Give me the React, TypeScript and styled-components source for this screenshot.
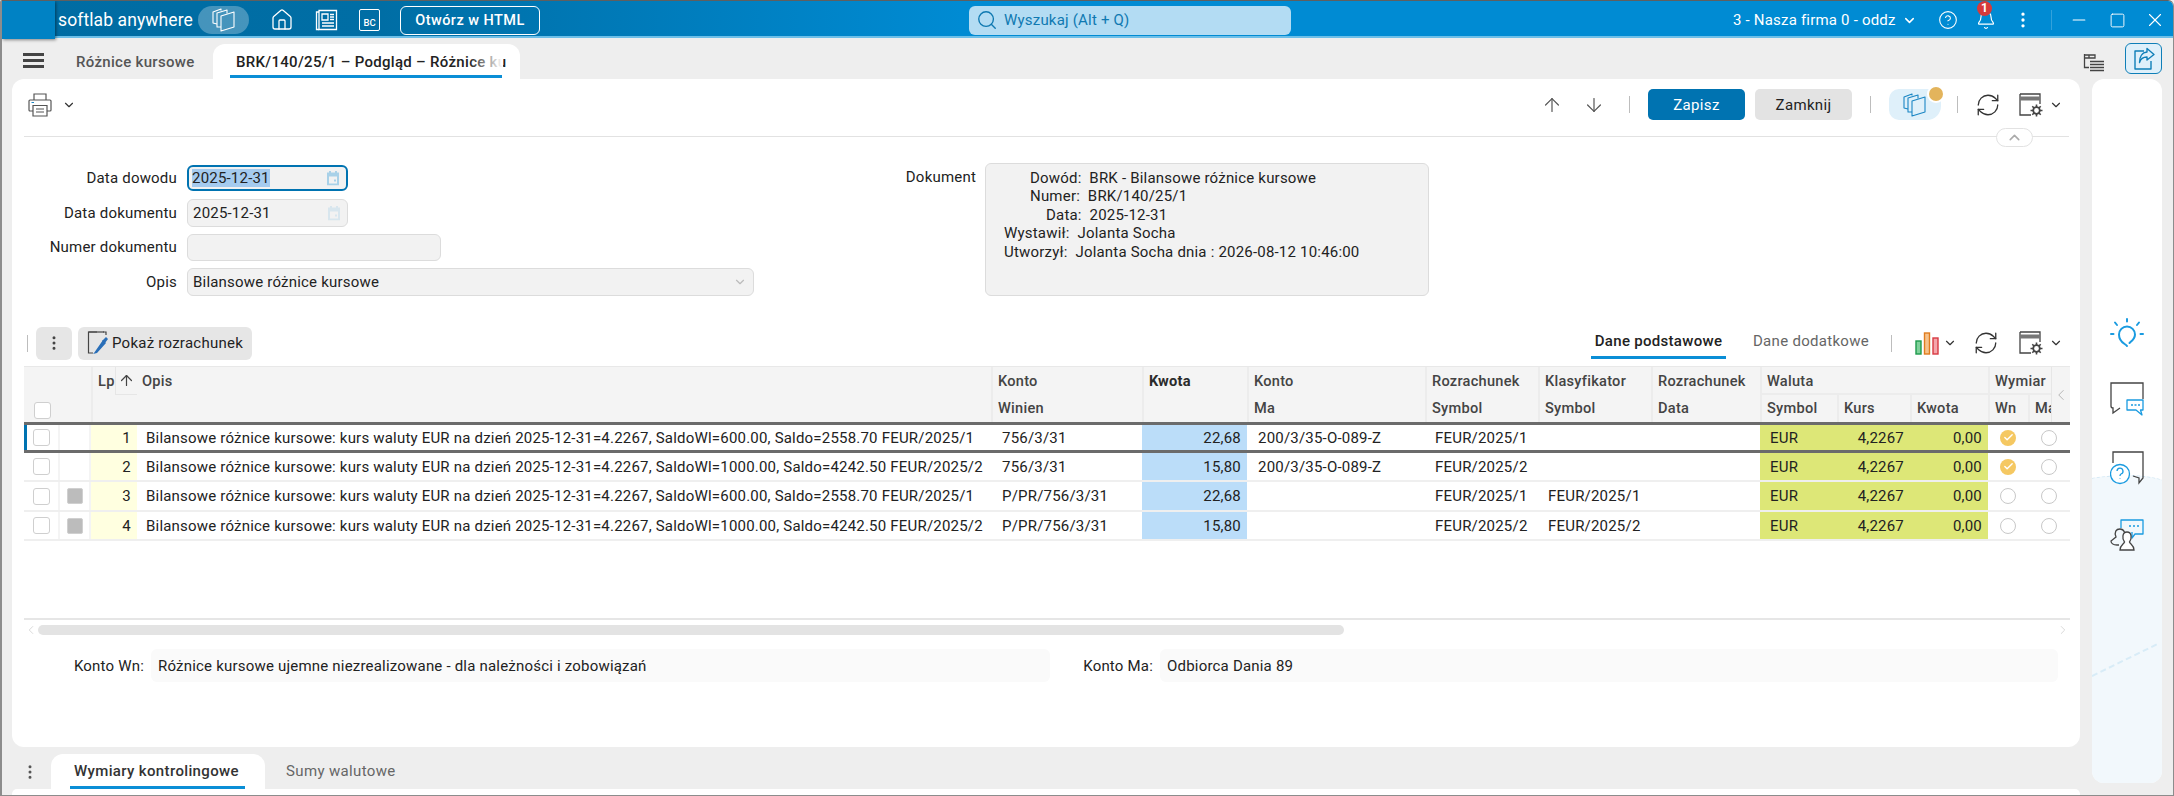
import React from "react";
import styled, { createGlobalStyle } from "styled-components";
import {
  ArrowDown,
  ArrowUp,
  Bell,
  Check,
  ChevronDown,
  ChevronLeft,
  ChevronRight,
  ChevronUp,
  CircleHelp,
  EllipsisVertical,
  Home,
  Minus,
  RefreshCw,
  Search,
  Square,
  X,
} from "lucide-react";

const GlobalStyle = createGlobalStyle`
  html, body {
    margin: 0;
    padding: 0;
    background: #eee;
    overflow: hidden;
  }
  * {
    box-sizing: border-box;
  }
`;

const COLUMNS = "36px 31px 46px 854px 151px 105px 178px 113px 113px 109px 77px 73px 78px 40px 42px";

const Frame = styled.div`
  width: 2174px;
  height: 796px;
  display: flex;
  flex-direction: column;
  background: #eee;
  border: 1px solid #8c8c8c;
  border-top-color: #5f5f5f;
  border-left-width: 2px;
  border-top-left-radius: 2px;
  border-top-right-radius: 6px;
  overflow: hidden;
  font-family: Roboto, "Liberation Sans", sans-serif;
  font-size: 15px;
  letter-spacing: 0.2px;
  color: #222;
`;

/* top bar */
const TopBar = styled.header`
  flex: none;
  height: 37px;
  display: grid;
  grid-template-columns: 967px 322px 1fr;
  align-items: center;
  color: #fff;
  background: linear-gradient(90deg, #006ca3 0, #006ea5 380px, #008bd3 960px);
  border-bottom: 2px solid #6dbfe8;
`;

const TopLeft = styled.div`
  display: flex;
  align-items: center;
  height: 100%;
`;

const LogoBlock = styled.div`
  width: 53px;
  height: 38px;
  background: #0082c4;
  box-shadow: 1px 1px 3px rgba(0, 0, 0, 0.45);
  flex: none;
`;

const Brand = styled.span`
  margin-left: 3px;
  width: 140px;
  font-size: 17.5px;
  letter-spacing: 0.1px;
  white-space: nowrap;
`;

const BrandPill = styled.div`
  width: 51px;
  height: 28px;
  border-radius: 14px;
  background: rgba(255, 255, 255, 0.27);
  display: flex;
  align-items: center;
  justify-content: center;
`;

const BarIcons = styled.div`
  display: flex;
  align-items: center;
  gap: 21px;
  margin-left: 21px;
`;

const BcBadge = styled.div`
  width: 21px;
  height: 22px;
  border: 1.5px solid #fff;
  border-radius: 2px;
  font-size: 9.5px;
  font-weight: 500;
  letter-spacing: 0;
  display: flex;
  align-items: flex-end;
  justify-content: center;
  padding-bottom: 2px;
`;

const HtmlButton = styled.button`
  margin-left: 20px;
  width: 140px;
  height: 29px;
  border: 1.5px solid #fff;
  border-radius: 6px;
  background: transparent;
  color: #fff;
  font: 500 14.5px Roboto, sans-serif;
  letter-spacing: 0.45px;
`;

const SearchBox = styled.div`
  height: 29px;
  border-radius: 6px;
  background: #b3dcf3;
  color: #0f79b1;
  display: flex;
  align-items: center;
  gap: 6px;
  padding-left: 7px;
`;

const TopRight = styled.div`
  display: flex;
  align-items: center;
  height: 100%;
  padding-left: 442px;
`;

const Company = styled.span`
  width: 158px;
  white-space: nowrap;
`;

const BarButton = styled.span<{ $width: number }>`
  position: relative;
  width: ${(p) => p.$width}px;
  height: 100%;
  display: flex;
  align-items: center;
  justify-content: center;
  flex: none;
`;

const Badge = styled.span`
  position: absolute;
  top: 0;
  left: 9px;
  width: 15px;
  height: 15px;
  border-radius: 50%;
  background: #d63a3a;
  color: #fff;
  font-size: 12px;
  font-weight: 700;
  line-height: 15px;
  text-align: center;
`;

const BarDivider = styled.span`
  width: 1px;
  height: 20px;
  background: rgba(255, 255, 255, 0.2);
  margin: 0 8px 0 9px;
  flex: none;
`;

/* work area */
const TabStrip = styled.nav`
  flex: none;
  height: 41px;
  display: flex;
  align-items: flex-end;
`;

const MenuButton = styled.div`
  width: 21px;
  height: 15px;
  margin: 0 32px 11px 21px;
  border-top: 3px solid #444;
  border-bottom: 3px solid #444;
  position: relative;
  flex: none;
  &::after {
    content: "";
    position: absolute;
    left: 0;
    right: 0;
    top: 3px;
    height: 3px;
    background: #444;
  }
`;

const TopTab = styled.div<{ $active?: boolean; $width: number }>`
  position: relative;
  width: ${(p) => p.$width}px;
  height: 35px;
  flex: none;
  padding: 9px 0 0 ${(p) => (p.$active ? 23 : 0)}px;
  background: ${(p) => (p.$active ? "#fff" : "transparent")};
  border-radius: 12px 12px 0 0;
  color: ${(p) => (p.$active ? "#222" : "#555")};
  font-weight: 500;
  letter-spacing: 0.3px;
  white-space: nowrap;
`;

const TabFade = styled.span`
  position: absolute;
  top: 4px;
  right: 17px;
  width: 34px;
  height: 24px;
  background: linear-gradient(90deg, rgba(255, 255, 255, 0), #fff);
`;

const TabLine = styled.span`
  position: absolute;
  left: 17px;
  right: 18px;
  bottom: 1px;
  height: 3px;
  background: #0a8ed6;
`;

const StripTools = styled.div`
  margin-left: auto;
  display: flex;
  align-items: flex-start;
  height: 36px;
  padding-right: 11px;
`;

const TreeSlot = styled.span`
  display: flex;
  margin-top: 10px;
`;

const ShareButton = styled.div`
  width: 37px;
  height: 31px;
  margin-left: 20px;
  border: 1px solid #0f7fb8;
  border-radius: 6px;
  background: #dff0fa;
  display: flex;
  align-items: center;
  justify-content: center;
`;

const Layout = styled.div`
  flex: 1;
  min-height: 0;
  display: grid;
  grid-template-columns: 2068px 70px;
  column-gap: 12px;
  padding-left: 10px;
`;

const LeftColumn = styled.div`
  display: flex;
  flex-direction: column;
`;

const MainPanel = styled.main`
  position: relative;
  height: 668px;
  flex: none;
  background: #fff;
  border-radius: 12px;
  padding: 0 11px 0 12px;
`;

const DocToolbar = styled.div`
  height: 58px;
  display: flex;
  align-items: center;
  border-bottom: 1px solid #e2e2e2;
  padding: 0 0 6px 4px;
`;

const IconSlot = styled.span<{ $width: number }>`
  width: ${(p) => p.$width}px;
  display: inline-flex;
  align-items: center;
  justify-content: center;
  flex: none;
  color: #555;
`;

const Spacer = styled.div`
  flex: 1;
`;

const Divider = styled.span<{ $left?: number; $right?: number }>`
  width: 1px;
  height: 17px;
  background: #bdbdbd;
  flex: none;
  margin: 0 ${(p) => p.$right ?? 0}px 0 ${(p) => p.$left ?? 0}px;
`;

const ActionButton = styled.button<{ $primary?: boolean }>`
  width: 97px;
  height: 31px;
  border: 0;
  border-radius: 5px;
  background: ${(p) => (p.$primary ? "#0073b1" : "#e3e3e3")};
  color: ${(p) => (p.$primary ? "#fff" : "#222")};
  font: 400 15px Roboto, sans-serif;
  letter-spacing: 0.35px;
  flex: none;
`;

const ModuleButton = styled.div`
  position: relative;
  width: 52px;
  height: 31px;
  border-radius: 10px 14px 14px 10px;
  background: #dff0fa;
  display: flex;
  align-items: center;
  justify-content: center;
  flex: none;
`;

const ModuleDot = styled.span`
  position: absolute;
  top: -2px;
  right: -2px;
  width: 14px;
  height: 14px;
  border-radius: 50%;
  background: #e3b45c;
  box-shadow: 0 0 0 2px #fff;
`;

const CollapsePill = styled.div`
  position: absolute;
  top: 49px;
  left: 1984px;
  width: 37px;
  height: 19px;
  border: 1px solid #e2e2e2;
  border-radius: 10px;
  background: #fff;
  display: flex;
  align-items: center;
  justify-content: center;
  color: #aaa;
`;

/* form */
const FormArea = styled.section`
  height: 189px;
  display: flex;
  padding-top: 28px;
`;

const FormColumn = styled.div`
  width: 880px;
  display: flex;
  flex-direction: column;
  gap: 7px;
`;

const FieldRow = styled.div<{ $short?: boolean }>`
  display: flex;
  align-items: center;
  height: ${(p) => (p.$short ? 26 : 27.5)}px;
  margin-bottom: ${(p) => (p.$short ? 1 : 0)}px;
`;

const FieldLabel = styled.label`
  width: 153px;
  flex: none;
  text-align: right;
`;

const Field = styled.div<{ $width: number; $focused?: boolean }>`
  position: relative;
  width: ${(p) => p.$width}px;
  height: ${(p) => (p.$focused ? 26 : 27.5)}px;
  margin-left: 10px;
  display: flex;
  align-items: center;
  padding-left: ${(p) => (p.$focused ? 3 : 5)}px;
  border: ${(p) => (p.$focused ? "2px solid #0073b1" : "1px solid #dcdcdc")};
  border-radius: 6px;
  background: #f2f2f2;
`;

const Selected = styled.span`
  background: #a5cbef;
`;

const FieldIcon = styled.span<{ $dim?: boolean }>`
  position: absolute;
  right: 6px;
  top: 50%;
  transform: translateY(-50%);
  display: flex;
  opacity: ${(p) => (p.$dim ? 0.35 : 1)};
`;

const DocColumn = styled.div`
  display: flex;
  align-items: flex-start;
  margin-top: -2px;
`;

const DocLabel = styled.label`
  width: 72px;
  flex: none;
  text-align: right;
  white-space: nowrap;
  line-height: 28px;
`;

const DocBox = styled.div`
  width: 444px;
  height: 133px;
  margin-left: 9px;
  padding-top: 5px;
  border: 1px solid #dcdcdc;
  border-radius: 6px;
  background: #f2f2f2;
  line-height: 18.4px;
`;

const DocLine = styled.div<{ $indent: number }>`
  margin-left: ${(p) => p.$indent}px;
  white-space: pre;
`;

/* grid toolbar */
const GridToolbar = styled.div`
  height: 40px;
  display: flex;
  align-items: flex-start;
  padding-left: 3px;
`;

const ToolBlock = styled.div`
  display: flex;
  align-items: center;
  height: 34px;
`;

const SoftButton = styled.button<{ $width: number; $gap?: number }>`
  width: ${(p) => p.$width}px;
  height: 33px;
  border: 0;
  border-radius: 6px;
  background: #e6e6e6;
  color: #222;
  font: 400 15px Roboto, sans-serif;
  letter-spacing: 0.25px;
  display: flex;
  align-items: center;
  justify-content: center;
  gap: 3px;
  padding: 0;
  margin-left: ${(p) => p.$gap ?? 6}px;
  flex: none;
`;

const ViewTab = styled.div<{ $active?: boolean; $width: number }>`
  width: ${(p) => p.$width}px;
  height: 31px;
  text-align: center;
  line-height: 27px;
  font-weight: ${(p) => (p.$active ? 500 : 400)};
  letter-spacing: 0.3px;
  color: ${(p) => (p.$active ? "#222" : "#666")};
  border-bottom: 3px solid ${(p) => (p.$active ? "#0a8ed6" : "transparent")};
  flex: none;
`;

/* table */
const Table = styled.div`
  width: 2046px;
  border-top: 1px solid #e8e8e8;
`;

const HeadGrid = styled.div`
  position: relative;
  display: grid;
  grid-template-columns: ${COLUMNS};
  grid-template-rows: 28px 27px;
  background: #f4f4f4;
  overflow: hidden;
`;

const HeadCell = styled.div<{
  $col: number;
  $row?: number;
  $colSpan?: number;
  $rowSpan?: number;
  $strong?: boolean;
  $under?: boolean;
  $noRule?: boolean;
}>`
  position: relative;
  grid-column: ${(p) => p.$col} / span ${(p) => p.$colSpan ?? 1};
  grid-row: ${(p) => p.$row ?? 1} / span ${(p) => p.$rowSpan ?? 1};
  padding: ${(p) => ((p.$row ?? 1) === 2 ? 4 : 5)}px 0 0 5px;
  font-weight: ${(p) => (p.$strong ? 700 : 500)};
  font-size: 14.6px;
  letter-spacing: 0.25px;
  color: ${(p) => (p.$strong ? "#2b2b2b" : "#444")};
  white-space: nowrap;
  overflow: hidden;
  border-left: ${(p) => (p.$noRule ? "0" : "2px solid #ececec")};
  border-bottom: ${(p) => (p.$under ? "2px solid #ececec" : "0")};
`;

const PlainHead = styled.div`
  grid-column: 1 / span 2;
  grid-row: 1 / span 2;
  display: flex;
  align-items: flex-end;
  padding: 0 0 3px 10px;
`;

const SortMark = styled.span`
  position: absolute;
  top: 0;
  right: 0;
  width: 22px;
  height: 28px;
  border-left: 1px solid #e6e6e6;
  border-bottom: 1px solid #e6e6e6;
  display: flex;
  align-items: center;
  justify-content: center;
  color: #444;
`;

const ScrollLeft = styled.div`
  position: absolute;
  top: 0;
  right: 0;
  width: 19px;
  height: 55px;
  background: #f4f4f4;
  border-left: 1px solid #e6e6e6;
  display: flex;
  align-items: center;
  justify-content: center;
  color: #b5b5b5;
`;

const Row = styled.div<{ $selected?: boolean; $height: number }>`
  position: relative;
  display: grid;
  grid-template-columns: ${COLUMNS};
  height: ${(p) => p.$height}px;
  border-top: ${(p) => (p.$selected ? "3px solid #6b6b6b" : "0")};
  border-bottom: ${(p) => (p.$selected ? "3px solid #6b6b6b" : "2px solid #efefef")};
  align-items: stretch;
  &::before {
    content: "";
    display: ${(p) => (p.$selected ? "block" : "none")};
    position: absolute;
    left: 0;
    top: 0;
    bottom: 0;
    width: 3px;
    background: #0073b1;
  }
`;

const Cell = styled.div<{ $tint?: string; $right?: boolean; $pad?: number }>`
  display: flex;
  align-items: center;
  justify-content: ${(p) => (p.$right ? "flex-end" : "flex-start")};
  padding: 0 ${(p) => (p.$right ? 6 : 0)}px 0 ${(p) => p.$pad ?? 0}px;
  background: ${(p) => p.$tint ?? "transparent"};
  white-space: nowrap;
  overflow: hidden;
  color: #222;
`;

const CenterCell = styled.div<{ $noRule?: boolean }>`
  display: flex;
  align-items: center;
  justify-content: center;
  border-right: ${(p) => (p.$noRule ? "0" : "2px solid #f4f4f4")};
`;

const Tick = styled.span`
  width: 17px;
  height: 17px;
  border: 1.5px solid #cfcfcf;
  border-radius: 3px;
  background: #fff;
  flex: none;
`;

const GrayMark = styled.span`
  width: 16px;
  height: 16px;
  border-radius: 2px;
  background: #bcbcbc;
  border: 1px solid #d0d0d0;
`;

const Radio = styled.span<{ $on?: boolean }>`
  width: 16px;
  height: 16px;
  border-radius: 50%;
  border: ${(p) => (p.$on ? "0" : "1px solid #c8c8c8")};
  background: ${(p) => (p.$on ? "#f5c862" : "#fff")};
  color: #fff;
  display: flex;
  align-items: center;
  justify-content: center;
`;

const TableGap = styled.div`
  height: 79px;
  border-bottom: 2px solid #e6e6e6;
`;

const ScrollRow = styled.div`
  height: 16px;
  width: 2046px;
  display: flex;
  align-items: center;
  padding-top: 3px;
  color: #d4d4d4;
`;

const ScrollTrack = styled.div`
  flex: 1;
  height: 10px;
  display: flex;
`;

const ScrollThumb = styled.div`
  width: 1306px;
  height: 10px;
  border-radius: 5px;
  background: #e3e3e3;
`;

const AccountRow = styled.div`
  display: flex;
  align-items: center;
  height: 33px;
  margin-top: 13px;
`;

const AccountLabel = styled.span<{ $width: number }>`
  width: ${(p) => p.$width}px;
  text-align: right;
  flex: none;
  padding-right: 7px;
`;

const AccountValue = styled.div<{ $width: number }>`
  width: ${(p) => p.$width}px;
  height: 33px;
  flex: none;
  border-radius: 6px;
  background: #fafafa;
  display: flex;
  align-items: center;
  padding-left: 7px;
`;

/* bottom tabs */
const BottomTabs = styled.div`
  height: 42px;
  flex: none;
  display: flex;
  align-items: flex-end;
  color: #555;
`;

const BottomMenu = styled.span`
  width: 39px;
  height: 35px;
  display: flex;
  align-items: center;
  justify-content: flex-start;
  padding-left: 9px;
`;

const BottomTab = styled.div<{ $active?: boolean; $width: number }>`
  position: relative;
  width: ${(p) => p.$width}px;
  height: 35px;
  flex: none;
  border-radius: 12px 12px 0 0;
  background: ${(p) => (p.$active ? "#fff" : "transparent")};
  color: ${(p) => (p.$active ? "#333" : "#666")};
  padding: 8px 0 0 ${(p) => (p.$active ? 23 : 21)}px;
  font-weight: ${(p) => (p.$active ? 500 : 400)};
  letter-spacing: 0.35px;
  white-space: nowrap;
`;

const BottomLine = styled.span`
  position: absolute;
  left: 19px;
  right: 20px;
  bottom: 0;
  height: 3px;
  background: #0a8ed6;
`;

const BottomEdge = styled.div`
  height: 6px;
  background: #fff;
  border-radius: 5px 5px 0 0;
`;

/* side panel */
const SidePanel = styled.aside`
  position: relative;
  height: 704px;
  background: #fff;
  border-radius: 12px;
  overflow: hidden;
  display: flex;
  flex-direction: column;
  align-items: center;
  padding-top: 239px;
  gap: 34px;
  &::before {
    content: "";
    position: absolute;
    left: -40px;
    right: -10px;
    top: 396px;
    height: 340px;
    border-top: 1px dashed #cfe6f4;
    border-radius: 100% 60% 0 0 / 12% 6% 0 0;
    background: #f2f8fc;
  }
  &::after {
    content: "";
    position: absolute;
    left: 0;
    top: 596px;
    width: 72px;
    border-top: 2px dashed #d8ecf7;
    transform-origin: left center;
    transform: rotate(-26deg);
  }
`;

const SideIcon = styled.span`
  position: relative;
  display: flex;
`;

const PagesIcon = ({ color, size = 26 }: { color: string; size?: number }) => (
  <svg width={size} height={size} viewBox="0 0 26 26" fill="none" stroke={color} strokeWidth="1.1" strokeLinejoin="round">
    <path d="M10 9 L23 5 V20 L10 24 Z" />
    <path d="M10 20 L6 20 V6 L16 3 V6.5" />
    <path d="M6 17 L2 16 V5 L10 2 V3.5" />
  </svg>
);

const NewsIcon = () => (
  <svg width="23" height="22" viewBox="0 0 23 22" fill="none" stroke="#fff" strokeWidth="1.3">
    <path d="M4 1.5 H21.5 V20.5 H4 Z" />
    <path d="M4 3 H1.5 V20.5 H4" />
    <path d="M7 5 H13 V11 H7 Z" />
    <path d="M15 5.5 H19 M15 8 H19 M15 10.5 H19 M7 14 H19 M7 17 H19" />
  </svg>
);

const PrinterIcon = () => (
  <svg width="24" height="24" viewBox="0 0 24 24" fill="none" stroke="#555" strokeWidth="1.2">
    <path d="M6 7 V1 H18 V7" />
    <path d="M5 18 H2 A1 1 0 0 1 1 17 V8 A1 1 0 0 1 2 7 H22 A1 1 0 0 1 23 8 V17 A1 1 0 0 1 22 18 H19" />
    <path d="M5 12.5 H19 V23 H5 Z" fill="#fff" />
    <path d="M8 16 H16 M8 19 H16" />
    <path d="M3.5 9.5 H6" stroke="#1a86c4" />
  </svg>
);

const WindowGearIcon = () => (
  <svg width="24" height="24" viewBox="0 0 24 24" fill="none" stroke="#444" strokeWidth="1.3">
    <path d="M1 1 H21 V11 M12 22 H1 V1" />
    <path d="M1 5.5 H21" strokeWidth="4" stroke="#777" />
    <circle cx="17.5" cy="17.5" r="3.3" strokeWidth="1.8" />
    <path d="M17.5 11.5 V14 M17.5 21 V23.5 M11.5 17.5 H14 M21 17.5 H23.5 M13.3 13.3 L15 15 M20 20 L21.7 21.7 M21.7 13.3 L20 15 M15 20 L13.3 21.7" strokeWidth="1.6" />
  </svg>
);

const CalendarIcon = () => (
  <svg width="14" height="15" viewBox="0 0 14 15" fill="#a9d1e8">
    <path d="M1 2 H3 V0.5 H5 V2 H9 V0.5 H11 V2 H13 V15 H1 Z M3 6 V13 H11 V6 Z" />
    <path d="M8 9 H10 V11 H8 Z" />
  </svg>
);

const TreeListIcon = () => (
  <svg width="22" height="20" viewBox="0 0 22 20" fill="none" stroke="#444" strokeWidth="1.3">
    <path d="M1.5 1 V7 M1.5 2 H6 V5 H1.5 M6 2 H12 V5 H6" />
    <path d="M7 8.5 H21 M7 11.5 H21 M7 14.5 H21 M7 17.5 H21 M1.5 7 V14.5 H6" />
  </svg>
);

const ShareIcon = () => (
  <svg width="24" height="24" viewBox="0 0 24 24" fill="none" stroke="#0f7fb8" strokeWidth="1.4" strokeLinejoin="round">
    <path d="M12 4 H3 V22 H19 V14" />
    <path d="M15 1.5 L22 7.5 L15 13 V10 C11 10 8.5 12 7.5 15.5 C7.5 10 10 5.5 15 5 Z" />
  </svg>
);

const NoteIcon = () => (
  <svg width="22" height="24" viewBox="0 0 22 24" fill="none">
    <path d="M10 1 H1.5 V22 H6 M16 1 H19 V4" stroke="#444" strokeWidth="1.2" />
    <path d="M1.5 1 H17" stroke="#444" strokeWidth="1.2" />
    <path d="M7 22 L16 9 L19 12 L10 22 L6 23 Z" fill="#2a6fb8" />
    <path d="M15 10 L19 6 L21 8 L18 12" fill="#2a6fb8" />
  </svg>
);

const ChartIcon = () => (
  <svg width="24" height="23" viewBox="0 0 24 23" fill="none" strokeWidth="1.4">
    <rect x="1" y="9" width="5" height="13" fill="#7fd19a" stroke="#1d9b4c" />
    <rect x="9.5" y="1" width="5" height="21" fill="#f6c28b" stroke="#e07c1e" />
    <rect x="18" y="6" width="5" height="16" fill="#f4a6ab" stroke="#d83a42" />
  </svg>
);

const BulbIcon = () => (
  <svg width="34" height="30" viewBox="0 0 34 30" fill="none" stroke="#1a9be0" strokeWidth="2" strokeLinecap="round">
    <path d="M17 28 C15.5 25.5 9 25 9 16.5 A8 8 0 1 1 25 16.5 C25 21 21.5 23 19.5 25" />
    <path d="M17 1 V3.5 M5 4.5 L7 7 M29 4.5 L27 7 M1 16 H3.5 M30.5 16 H33" />
  </svg>
);

const ChatIcon = () => (
  <svg width="34" height="35" viewBox="0 0 34 35" fill="none" strokeWidth="1.3">
    <path d="M33 17 V1 H1 V24 C1 25 2 26 3 26 V31 L10 26" stroke="#444" />
    <path d="M17 18 H33 V28 H30.5 L32 33 L26 28 H17 Z" fill="#fff" stroke="#1a9be0" strokeLinejoin="round" />
    <path d="M21 23 H23 M24.5 23 H26.5 M28 23 H30" stroke="#1a9be0" />
  </svg>
);

const HelpChatIcon = () => (
  <svg width="34" height="34" viewBox="0 0 34 34" fill="none" strokeWidth="1.3">
    <path d="M3 12 V1 H33 V27 L29 32 V27 L23 25" stroke="#444" />
    <circle cx="10" cy="23" r="9.5" fill="#fff" stroke="#1a9be0" />
    <path d="M7 20 A3 3 0 1 1 11 23 C10 23.5 10 24.5 10 25 M10 27.5 V28" stroke="#1a9be0" />
  </svg>
);

const PeopleChatIcon = () => (
  <svg width="34" height="32" viewBox="0 0 34 32" fill="none" strokeWidth="1.3">
    <path d="M11 9 V1 H33 V15 H25 L22 19 V13" stroke="#1a9be0" strokeLinejoin="round" />
    <path d="M19 7 H21 M23 7 H25 M27 7 H29" stroke="#1a9be0" />
    <path d="M9 26 H7 C3 26 1 24 1 22 L6 18 C4 13 6 10 10 10 C12 10 13.5 11 14.5 13" stroke="#444" />
    <path d="M10 31 H24 C24 26 20 25 19.5 23 C22 20 22 13 17 13 C12 13 12 20 14.5 23 C14 25 10 26 10 31 Z" fill="#fff" stroke="#444" />
  </svg>
);

const opis = [
  "Bilansowe różnice kursowe: kurs waluty EUR na dzień 2025-12-31=4.2267, SaldoWl=600.00, Saldo=2558.70 FEUR/2025/1",
  "Bilansowe różnice kursowe: kurs waluty EUR na dzień 2025-12-31=4.2267, SaldoWl=1000.00, Saldo=4242.50 FEUR/2025/2",
];

const rows = [
  { lp: 1, opis: opis[0], wn: "756/3/31", kwota: "22,68", ma: "200/3/35-O-089-Z", rozr: "FEUR/2025/1", klas: "", gray: false, on: true, h: 31 },
  { lp: 2, opis: opis[1], wn: "756/3/31", kwota: "15,80", ma: "200/3/35-O-089-Z", rozr: "FEUR/2025/2", klas: "", gray: false, on: true, h: 29 },
  { lp: 3, opis: opis[0], wn: "P/PR/756/3/31", kwota: "22,68", ma: "", rozr: "FEUR/2025/1", klas: "FEUR/2025/1", gray: true, on: false, h: 30 },
  { lp: 4, opis: opis[1], wn: "P/PR/756/3/31", kwota: "15,80", ma: "", rozr: "FEUR/2025/2", klas: "FEUR/2025/2", gray: true, on: false, h: 29 },
];

const LIME = "#dde777";

export default function App() {
  return (
    <>
      <GlobalStyle />
      <Frame>
        <TopBar>
          <TopLeft>
            <LogoBlock />
            <Brand>softlab anywhere</Brand>
            <BrandPill>
              <PagesIcon color="#fff" />
            </BrandPill>
            <BarIcons>
              <Home size={24} color="#fff" strokeWidth={1.3} />
              <NewsIcon />
              <BcBadge>BC</BcBadge>
            </BarIcons>
            <HtmlButton>Otwórz w HTML</HtmlButton>
          </TopLeft>
          <SearchBox>
            <Search size={22} strokeWidth={1.5} />
            Wyszukaj (Alt + Q)
          </SearchBox>
          <TopRight>
            <Company>3 - Nasza firma 0 - oddz</Company>
            <BarButton $width={37}>
              <ChevronDown size={15} strokeWidth={2.4} />
            </BarButton>
            <BarButton $width={40}>
              <CircleHelp size={20} strokeWidth={1.3} />
            </BarButton>
            <BarButton $width={36}>
              <Bell size={20} strokeWidth={1.4} />
              <Badge>1</Badge>
            </BarButton>
            <BarButton $width={38}>
              <EllipsisVertical size={20} strokeWidth={2} />
            </BarButton>
            <BarDivider />
            <BarButton $width={38}>
              <Minus size={20} strokeWidth={1.3} />
            </BarButton>
            <BarButton $width={38}>
              <Square size={17} strokeWidth={1.3} />
            </BarButton>
            <BarButton $width={38}>
              <X size={22} strokeWidth={1.2} />
            </BarButton>
          </TopRight>
        </TopBar>

        <TabStrip>
          <MenuButton />
          <TopTab $width={137}>Różnice kursowe</TopTab>
          <TopTab $active $width={307}>
            BRK/140/25/1 – Podgląd – Różnice ku
            <TabFade />
            <TabLine />
          </TopTab>
          <StripTools>
            <TreeSlot>
              <TreeListIcon />
            </TreeSlot>
            <ShareButton>
              <ShareIcon />
            </ShareButton>
          </StripTools>
        </TabStrip>

        <Layout>
          <LeftColumn>
            <MainPanel>
              <DocToolbar>
                <PrinterIcon />
                <IconSlot $width={34}>
                  <ChevronDown size={14} strokeWidth={2} color="#333" />
                </IconSlot>
                <Spacer />
                <IconSlot $width={22}>
                  <ArrowUp size={22} strokeWidth={1.3} />
                </IconSlot>
                <IconSlot $width={20} />
                <IconSlot $width={22}>
                  <ArrowDown size={22} strokeWidth={1.3} />
                </IconSlot>
                <Divider $left={24} $right={18} />
                <ActionButton $primary>Zapisz</ActionButton>
                <IconSlot $width={10} />
                <ActionButton>Zamknij</ActionButton>
                <Divider $left={18} $right={18} />
                <ModuleButton>
                  <PagesIcon color="#1a86c4" size={26} />
                  <ModuleDot />
                </ModuleButton>
                <Divider $left={16} $right={13} />
                <IconSlot $width={34}>
                  <RefreshCw size={26} strokeWidth={1.2} color="#333" />
                </IconSlot>
                <IconSlot $width={14} />
                <WindowGearIcon />
                <IconSlot $width={26}>
                  <ChevronDown size={14} strokeWidth={2} color="#333" />
                </IconSlot>
              </DocToolbar>
              <CollapsePill>
                <ChevronUp size={17} strokeWidth={2.2} />
              </CollapsePill>

              <FormArea>
                <FormColumn>
                  <FieldRow $short>
                    <FieldLabel>Data dowodu</FieldLabel>
                    <Field $width={161} $focused>
                      <Selected>2025-12-31</Selected>
                      <FieldIcon>
                        <CalendarIcon />
                      </FieldIcon>
                    </Field>
                  </FieldRow>
                  <FieldRow>
                    <FieldLabel>Data dokumentu</FieldLabel>
                    <Field $width={161}>
                      2025-12-31
                      <FieldIcon $dim>
                        <CalendarIcon />
                      </FieldIcon>
                    </Field>
                  </FieldRow>
                  <FieldRow>
                    <FieldLabel>Numer dokumentu</FieldLabel>
                    <Field $width={254} />
                  </FieldRow>
                  <FieldRow>
                    <FieldLabel>Opis</FieldLabel>
                    <Field $width={567}>
                      Bilansowe różnice kursowe
                      <FieldIcon>
                        <ChevronDown size={14} color="#bbb" />
                      </FieldIcon>
                    </Field>
                  </FieldRow>
                </FormColumn>
                <DocColumn>
                  <DocLabel>Dokument</DocLabel>
                  <DocBox>
                    <DocLine $indent={44}>{"Dowód:  BRK - Bilansowe różnice kursowe"}</DocLine>
                    <DocLine $indent={44}>{"Numer:  BRK/140/25/1"}</DocLine>
                    <DocLine $indent={60}>{"Data:  2025-12-31"}</DocLine>
                    <DocLine $indent={18}>{"Wystawił:  Jolanta Socha"}</DocLine>
                    <DocLine $indent={18}>{"Utworzył:  Jolanta Socha dnia : 2026-08-12 10:46:00"}</DocLine>
                  </DocBox>
                </DocColumn>
              </FormArea>

              <GridToolbar>
                <ToolBlock>
                  <Divider />
                  <SoftButton $width={36} $gap={8}>
                    <EllipsisVertical size={18} strokeWidth={2} color="#444" />
                  </SoftButton>
                  <SoftButton $width={174}>
                    <NoteIcon />
                    Pokaż rozrachunek
                  </SoftButton>
                </ToolBlock>
                <Spacer />
                <ToolBlock>
                  <ViewTab $active $width={135}>Dane podstawowe</ViewTab>
                  <IconSlot $width={25} />
                  <ViewTab $width={120}>Dane dodatkowe</ViewTab>
                  <Divider $left={20} $right={23} />
                  <ChartIcon />
                  <IconSlot $width={22}>
                    <ChevronDown size={14} strokeWidth={2} color="#333" />
                  </IconSlot>
                  <IconSlot $width={50}>
                    <RefreshCw size={26} strokeWidth={1.2} color="#333" />
                  </IconSlot>
                  <IconSlot $width={8} />
                  <WindowGearIcon />
                  <IconSlot $width={26}>
                    <ChevronDown size={14} strokeWidth={2} color="#333" />
                  </IconSlot>
                </ToolBlock>
              </GridToolbar>

              <Table>
                <HeadGrid>
                  <PlainHead>
                    <Tick />
                  </PlainHead>
                  <HeadCell $col={3} $rowSpan={2}>
                    Lp
                    <SortMark>
                      <ArrowUp size={17} strokeWidth={1.7} />
                    </SortMark>
                  </HeadCell>
                  <HeadCell $col={4} $rowSpan={2} $noRule>Opis</HeadCell>
                  <HeadCell $col={5}>Konto</HeadCell>
                  <HeadCell $col={5} $row={2}>Winien</HeadCell>
                  <HeadCell $col={6} $rowSpan={2} $strong>Kwota</HeadCell>
                  <HeadCell $col={7}>Konto</HeadCell>
                  <HeadCell $col={7} $row={2}>Ma</HeadCell>
                  <HeadCell $col={8}>Rozrachunek</HeadCell>
                  <HeadCell $col={8} $row={2}>Symbol</HeadCell>
                  <HeadCell $col={9}>Klasyfikator</HeadCell>
                  <HeadCell $col={9} $row={2}>Symbol</HeadCell>
                  <HeadCell $col={10}>Rozrachunek</HeadCell>
                  <HeadCell $col={10} $row={2}>Data</HeadCell>
                  <HeadCell $col={11} $colSpan={3} $under>Waluta</HeadCell>
                  <HeadCell $col={11} $row={2}>Symbol</HeadCell>
                  <HeadCell $col={12} $row={2}>Kurs</HeadCell>
                  <HeadCell $col={13} $row={2}>Kwota</HeadCell>
                  <HeadCell $col={14} $colSpan={2} $under>Wymiar</HeadCell>
                  <HeadCell $col={14} $row={2}>Wn</HeadCell>
                  <HeadCell $col={15} $row={2}>Ma</HeadCell>
                  <ScrollLeft>
                    <ChevronLeft size={22} strokeWidth={1.3} />
                  </ScrollLeft>
                </HeadGrid>
                {rows.map((r, i) => (
                  <Row key={r.lp} $selected={i === 0} $height={r.h}>
                    <CenterCell>
                      <Tick />
                    </CenterCell>
                    <CenterCell>{r.gray && <GrayMark />}</CenterCell>
                    <Cell $tint="#ffffe0" $right>{r.lp}</Cell>
                    <Cell $pad={9}>{r.opis}</Cell>
                    <Cell $pad={11}>{r.wn}</Cell>
                    <Cell $tint="#bbddf9" $right>{r.kwota}</Cell>
                    <Cell $pad={11}>{r.ma}</Cell>
                    <Cell $pad={10}>{r.rozr}</Cell>
                    <Cell $pad={10}>{r.klas}</Cell>
                    <Cell />
                    <Cell $tint={LIME} $pad={10}>EUR</Cell>
                    <Cell $tint={LIME} $right>4,2267</Cell>
                    <Cell $tint={LIME} $right>0,00</Cell>
                    <CenterCell $noRule>
                      <Radio $on={r.on}>{r.on && <Check size={11} strokeWidth={3} />}</Radio>
                    </CenterCell>
                    <CenterCell $noRule>
                      <Radio />
                    </CenterCell>
                  </Row>
                ))}
                <TableGap />
              </Table>
              <ScrollRow>
                <ChevronLeft size={14} strokeWidth={1.5} />
                <ScrollTrack>
                  <ScrollThumb />
                </ScrollTrack>
                <ChevronRight size={14} strokeWidth={1.5} />
              </ScrollRow>
              <AccountRow>
                <AccountLabel $width={127}>Konto Wn:</AccountLabel>
                <AccountValue $width={899}>
                  Różnice kursowe ujemne niezrealizowane - dla należności i zobowiązań
                </AccountValue>
                <AccountLabel $width={110}>Konto Ma:</AccountLabel>
                <AccountValue $width={898}>Odbiorca Dania 89</AccountValue>
              </AccountRow>
            </MainPanel>

            <BottomTabs>
              <BottomMenu>
                <EllipsisVertical size={18} strokeWidth={2} />
              </BottomMenu>
              <BottomTab $active $width={214}>
                Wymiary kontrolingowe
                <BottomLine />
              </BottomTab>
              <BottomTab $width={160}>Sumy walutowe</BottomTab>
            </BottomTabs>
            <BottomEdge />
          </LeftColumn>

          <SidePanel>
            <SideIcon>
              <BulbIcon />
            </SideIcon>
            <SideIcon>
              <ChatIcon />
            </SideIcon>
            <SideIcon>
              <HelpChatIcon />
            </SideIcon>
            <SideIcon>
              <PeopleChatIcon />
            </SideIcon>
          </SidePanel>
        </Layout>
      </Frame>
    </>
  );
}
